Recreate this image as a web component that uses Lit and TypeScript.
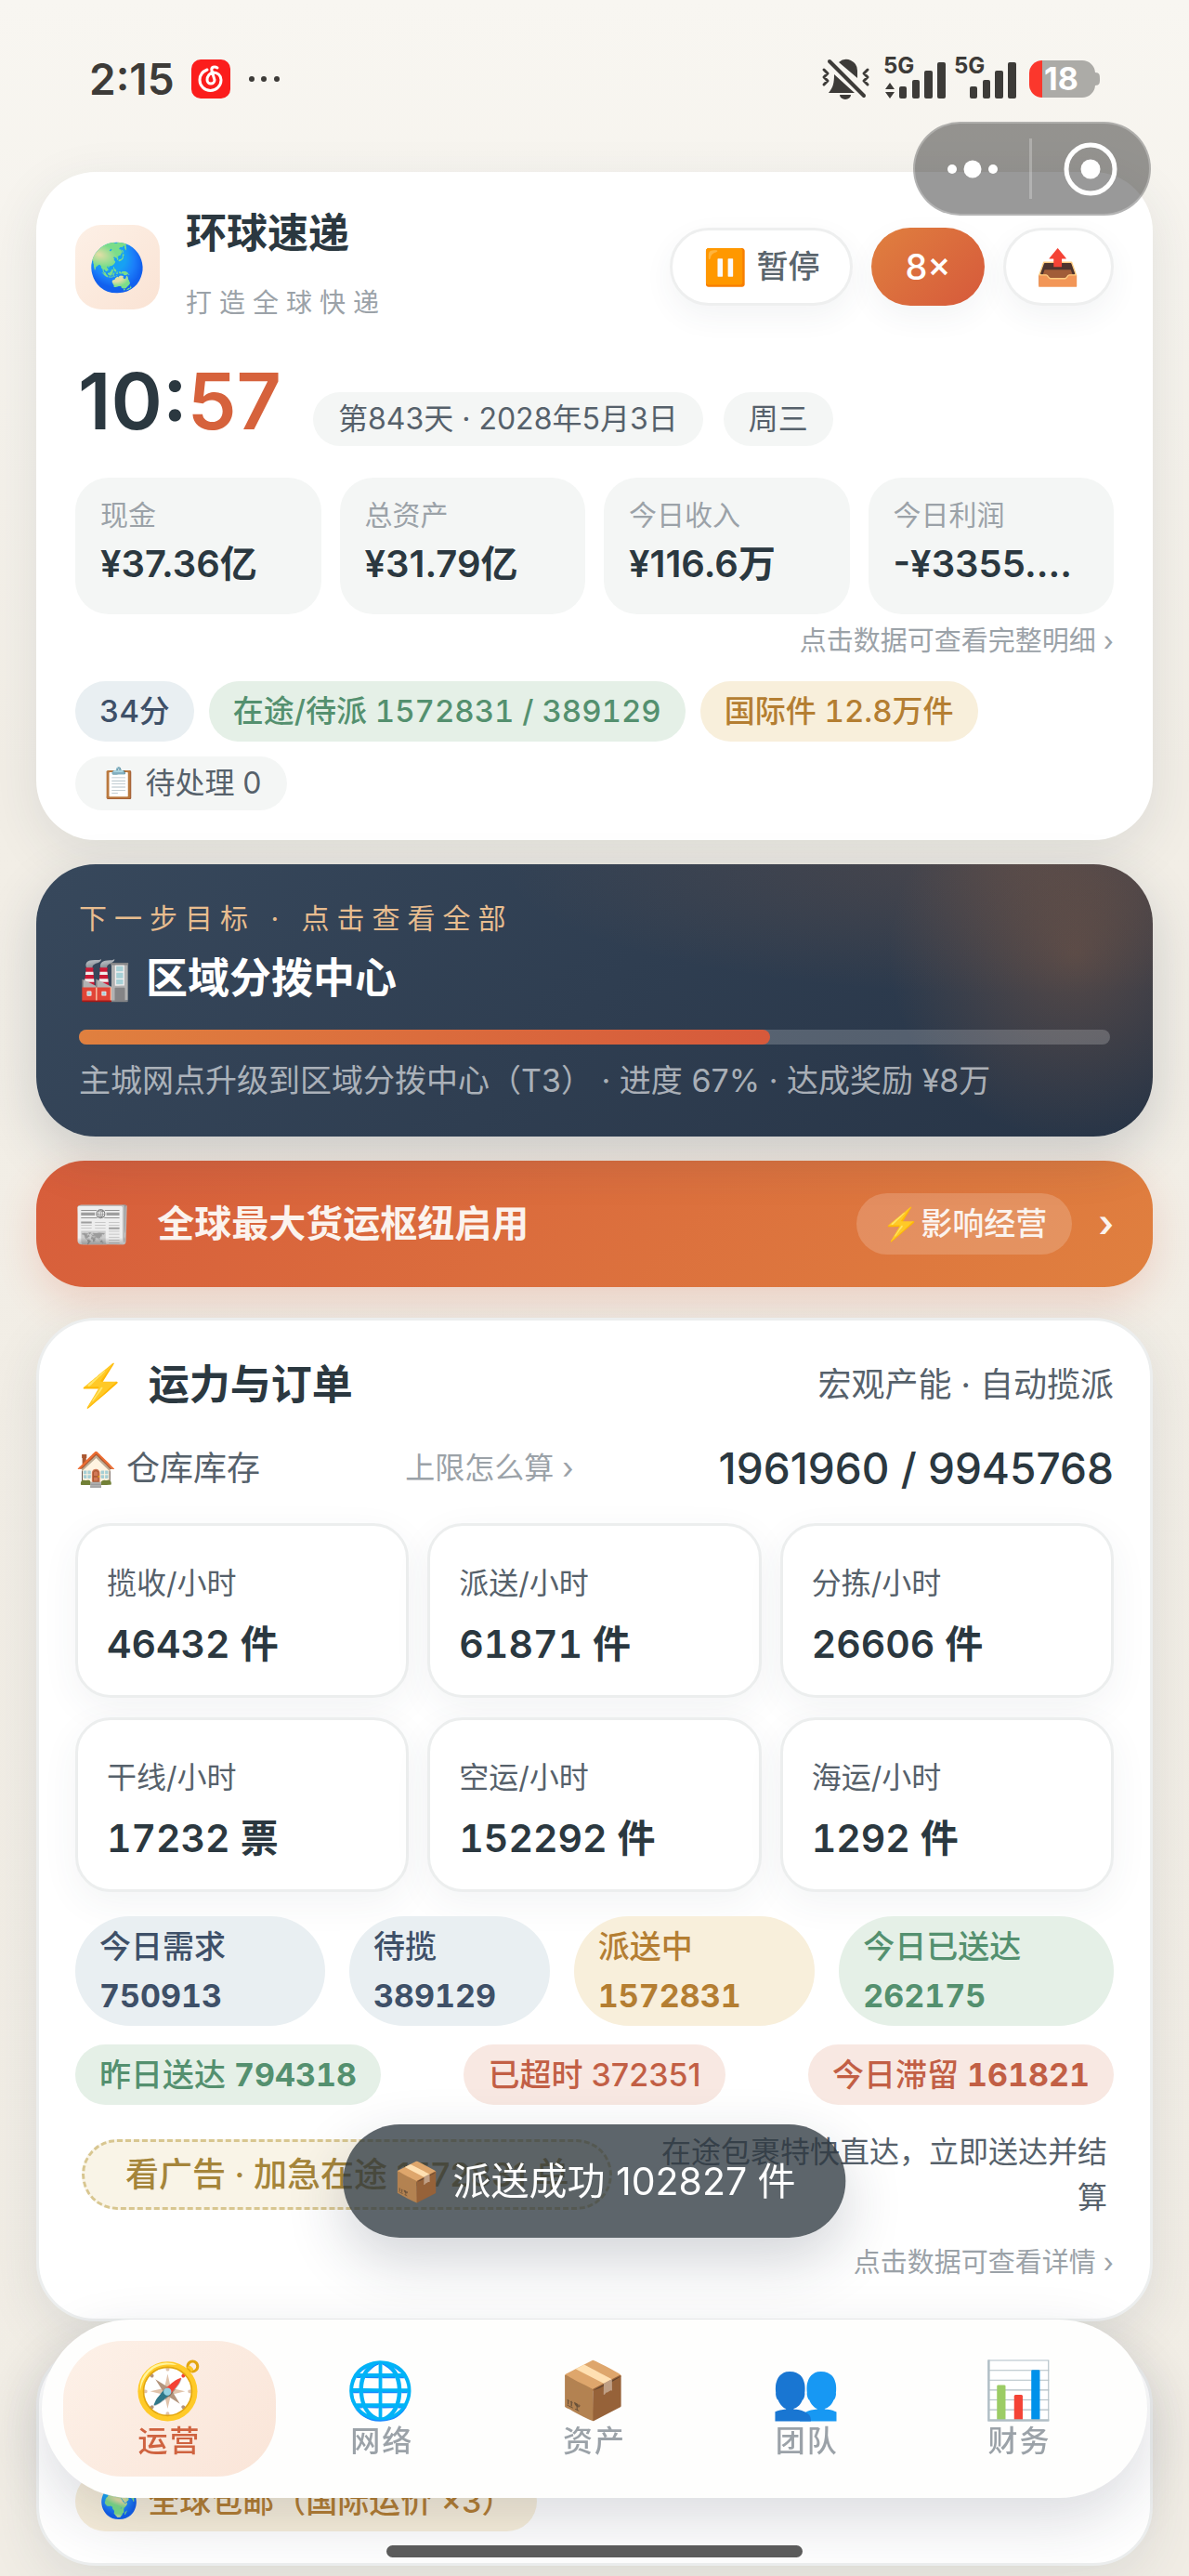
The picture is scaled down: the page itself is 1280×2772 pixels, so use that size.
import { LitElement, css, html, svg } from 'lit';
import { customElement, state } from 'lit/decorators.js';
import { classMap } from 'lit/directives/class-map.js';
import { styleMap } from 'lit/directives/style-map.js';

const STATS = [
    { label: '现金', value: '¥37.36亿' },
    { label: '总资产', value: '¥31.79亿' },
    { label: '今日收入', value: '¥116.6万' },
    { label: '今日利润', value: '-¥3355.…' },
];

const RATES = [
    { label: '揽收/小时', value: '46432 件' },
    { label: '派送/小时', value: '61871 件' },
    { label: '分拣/小时', value: '26606 件' },
    { label: '干线/小时', value: '17232 票' },
    { label: '空运/小时', value: '152292 件' },
    { label: '海运/小时', value: '1292 件' },
];

const FLOW = [
    { label: '今日需求', value: 750913, tone: 'blue' },
    { label: '待揽', value: 389129, tone: 'blue' },
    { label: '派送中', value: 1572831, tone: 'gold' },
    { label: '今日已送达', value: 262175, tone: 'green' },
];

const TABS = [
    { icon: '🧭', label: '运营' },
    { icon: '🌐', label: '网络' },
    { icon: '📦', label: '资产' },
    { icon: '👥', label: '团队' },
    { icon: '📊', label: '财务' },
];

@customElement('app-root')
export class AppRoot extends LitElement {
    @state() tab = 0;

    @state() progress = 67;



    // STYLE

    static styles = css`
        :host{
            display: block;
            min-height: 100vh;
            box-sizing: border-box;
            overflow: hidden;

            font-family: Inter, "Noto Sans CJK SC", "Noto Color Emoji", sans-serif;
            font-size: 32px;
            line-height: 48px;
            color: #2b3840;
            background: linear-gradient(180deg, #f8f6f1 0%, #f2eee6 30%, #f1ede5 100%);
        }

        *{
            box-sizing: border-box;
        }

        button{
            margin: 0;
            padding: 0;
            border: 0;
            background: none;
            font: inherit;
            color: inherit;
            text-align: inherit;
            cursor: pointer;
        }

        a{
            color: inherit;
            text-decoration: none;
        }

        h1, h2, p{
            margin: 0;
        }

        svg{
            display: block;
            flex: none;
        }

        .row{
            display: flex;
            align-items: center;
        }
        .between{
            justify-content: space-between;
        }

        /* status bar */

        .status{
            display: flex;
            align-items: center;
            justify-content: space-between;
            height: 185px;
            padding: 0 96px 16px;
            color: #3d3b38;
        }
        .status .row{
            gap: 18px;
        }
        .status .time{
            font-size: 46px;
            font-weight: 600;
        }
        .status .signals{
            gap: 12px;
        }

        .capsule{
            position: absolute;
            top: 131px;
            right: 41px;

            display: grid;
            grid-template-columns: 123px 3px 1fr;
            align-items: center;
            width: 256px;
            height: 101px;
            border: 2px solid rgb(255 255 255 / 0.25);
            border-radius: 51px;
            background: rgb(0 0 0 / 0.4);
        }
        .capsule button{
            display: grid;
            place-items: center;
        }
        .capsule .line{
            height: 65px;
            background: rgb(255 255 255 / 0.25);
        }

        /* cards */

        main{
            display: flex;
            flex-direction: column;
            gap: 26px;
            padding: 0 39px 15px;
        }

        .card{
            padding: 38px 42px 32px;
            border-radius: 64px;
            background: white;
            box-shadow: 0 16px 56px rgb(44 62 80 / 0.1);
        }
        .card.lined{
            border: 3px solid #eceeee;
            padding: 36px 39px;
        }

        .brand{
            gap: 28px;
        }
        .brand .logo{
            display: grid;
            place-items: center;
            width: 91px;
            height: 91px;
            border-radius: 28px;
            background: linear-gradient(135deg, #fdf0e6, #fae3d4);
            font-size: 50px;
        }
        h1{
            font-size: 44px;
            line-height: 56px;
            font-weight: 700;
        }
        .brand p{
            margin-top: 22px;
            font-size: 28px;
            line-height: 50px;
            letter-spacing: 8px;
            color: #9ba2a8;
        }

        .actions{
            gap: 20px;
        }
        .action{
            display: flex;
            align-items: center;
            gap: 10px;
            height: 84px;
            padding: 0 33px;
            border: 3px solid #eeefef;
            border-radius: 42px;
            background: white;
            box-shadow: 0 12px 32px rgb(44 62 80 / 0.06);
            font-size: 34px;
            font-weight: 500;
            color: #5a656d;
        }
        .action span{
            font-size: 38px;
        }
        .action.speed{
            border-color: transparent;
            background: linear-gradient(135deg, #e0803f, #d6593b) border-box;
            color: white;
        }

        .clock{
            align-items: flex-end;
            gap: 22px;
            margin-top: 33px;
            padding-left: 3px;
        }
        .clock time{
            margin-right: 12px;
            font-size: 84px;
            line-height: 96px;
            font-weight: 600;
        }
        .clock em{
            font-style: normal;
            color: #d6623c;
        }

        .pill{
            padding: 0 27px;
            border-radius: 33px;
            background: #f4f6f5;
            line-height: 58px;
            color: #56616b;
            white-space: nowrap;
        }

        .stats{
            display: grid;
            grid-template-columns: repeat(4, minmax(0, 1fr));
            gap: 20px;
            margin-top: 34px;
        }
        .stat{
            padding: 16px 27px 25px;
            border-radius: 36px;
            background: #f4f6f5;
        }
        .stat span{
            display: block;
            font-size: 30px;
            color: #9ba2a8;
        }
        .stat strong{
            display: block;
            font-size: 40px;
            line-height: 58px;
            font-weight: 600;
            white-space: nowrap;
        }

        .hint{
            display: block;
            font-size: 29px;
            text-align: right;
            color: #9ba2a8;
        }
        .stats + .hint{
            margin-top: 5px;
        }

        .tag{
            padding: 6px 26px;
            border-radius: 60px;
            font-size: 34px;
            line-height: 53px;
            font-weight: 500;
        }
        .tag strong{
            font-weight: 700;
        }
        .tags{
            display: flex;
            flex-wrap: wrap;
            gap: 16px;
            margin-top: 19px;
        }
        .tags .tag{
            font-size: 33px;
        }
        .tags, .tag strong, .rate strong{
            font-variant-numeric: tabular-nums;
        }
        .blue{
            background: #e9eff2;
            color: #3e5068;
        }
        .green{
            background: #e5f0e7;
            color: #54906f;
        }
        .gold{
            background: #f8efdb;
            color: #b47e32;
        }
        .red{
            background: #f8e8e2;
            color: #c25f45;
        }

        /* goal */

        .goal{
            position: relative;
            display: block;
            width: 100%;
            padding: 34px 46px 36px;
            border-radius: 64px;
            background:
                radial-gradient(circle 200px at 93% 33%, rgb(224 128 63 / 0.24), transparent),
                radial-gradient(ellipse 560px 140px at 88% 0, rgb(224 128 63 / 0.16), transparent),
                linear-gradient(135deg, #37485c, #273446);
            box-shadow: 0 20px 56px rgb(44 62 80 / 0.2);
            color: white;
        }
        .goal .eyebrow{
            display: block;
            font-size: 30px;
            letter-spacing: 8px;
            color: #e8bd8f;
        }
        h2{
            display: flex;
            align-items: center;
            gap: 24px;
            font-size: 44px;
            line-height: 66px;
            font-weight: 700;
        }
        .goal h2{
            gap: 16px;
            margin-top: 8px;
            font-size: 45px;
        }
        .bar{
            height: 16px;
            margin-top: 22px;
            border-radius: 8px;
            background: rgb(255 255 255 / 0.2);
        }
        .bar div{
            height: 100%;
            border-radius: 8px;
            background: linear-gradient(90deg, #e0803f, #d6593b);
        }
        .goal p{
            margin-top: 15px;
            font-size: 34px;
            color: rgb(255 255 255 / 0.6);
        }

        /* news */

        .news{
            display: flex;
            align-items: center;
            gap: 28px;
            width: 100%;
            padding: 35px 42px 35px 40px;
            border-radius: 52px;
            background: linear-gradient(135deg, #d75d3b, #e0803f);
            box-shadow: 0 16px 44px rgb(214 89 59 / 0.2);
            font-size: 40px;
            font-weight: 600;
            color: #fbf3ee;
        }
        .news .icon{
            font-size: 50px;
        }
        .news .title{
            flex: 1;
        }
        .news .effect{
            padding: 0 27px;
            border-radius: 33px;
            background: rgb(255 255 255 / 0.18);
            font-size: 34px;
            line-height: 66px;
            font-weight: 500;
        }

        /* capacity */

        .capacity{
            margin-top: 7px;
        }
        .capacity .soft{
            font-size: 36px;
            color: #56616b;
        }
        .stock{
            margin-top: 25px;
        }
        .stock a{
            color: #9ba2a8;
        }
        .stock strong{
            font-size: 46px;
            line-height: 64px;
            font-weight: 500;
        }

        .rates{
            display: grid;
            grid-template-columns: repeat(3, minmax(0, 1fr));
            gap: 21px 20px;
            margin-top: 27px;
        }
        .rate{
            padding: 38px 31px 22px;
            border: 3px solid #eceeee;
            border-radius: 38px;
            background: white;
            box-shadow: 0 12px 40px rgb(44 62 80 / 0.06);
            color: #56616b;
        }
        .rate strong{
            display: block;
            margin-top: 8px;
            font-size: 41px;
            line-height: 66px;
            font-weight: 600;
            color: #2b3840;
        }

        .flow{
            display: flex;
            justify-content: space-between;
            gap: 26px;
            margin-top: 26px;
        }
        .flow + .flow{
            margin-top: 20px;
        }

        .boost{
            display: flex;
            align-items: center;
            gap: 30px;
            margin-top: 26px;
            padding: 0 7px;
        }
        .boost button{
            flex: none;
            height: 76px;
            padding: 0 44px;
            border: 3px dashed #d8c690;
            border-radius: 38px;
            background: #f9f4e7;
            font-size: 36px;
            font-weight: 500;
            color: #a5853a;
        }
        .boost p{
            flex: 1;
            line-height: 49px;
            text-align: right;
            color: #56616b;
        }
        .boost + .hint{
            margin-top: 22px;
        }

        .card.events{
            padding-top: 132px;
            padding-bottom: 34px;
        }
        .events .tag{
            display: inline-flex;
            align-items: center;
            gap: 10px;
            vertical-align: top;
        }

        /* overlays */

        .toast{
            position: fixed;
            left: 50%;
            bottom: 364px;
            transform: translateX(-50%);

            display: flex;
            align-items: center;
            gap: 13px;
            height: 122px;
            padding: 0 54px;
            border-radius: 61px;
            background: rgb(44 54 62 / 0.77);
            box-shadow: 0 24px 64px rgb(30 40 60 / 0.2);
            font-size: 41px;
            color: white;
            white-space: nowrap;
        }

        nav{
            position: fixed;
            left: 45px;
            right: 45px;
            bottom: 84px;

            display: grid;
            grid-template-columns: repeat(5, 1fr);
            padding: 23px;
            border-radius: 96px;
            background: #fefefd;
            box-shadow: 0 24px 64px rgb(30 40 60 / 0.16);
        }
        nav button{
            display: flex;
            flex-direction: column;
            align-items: center;
            height: 146px;
            padding-top: 17px;
            border-radius: 64px;
            letter-spacing: 2px;
            line-height: 42px;
            font-weight: 500;
            color: #9ba2a8;
        }
        nav .icon{
            font-size: 60px;
            line-height: 70px;
        }
        nav button.active{
            background: linear-gradient(135deg, #fdf1e8, #fae5d8);
            color: #cf6340;
        }

        .home{
            position: fixed;
            left: 50%;
            bottom: 20px;
            transform: translateX(-50%);
            width: 448px;
            height: 13px;
            border-radius: 7px;
            background: #5b5b5b;
        }
    `;



    // MARKUP

    renderSignal(x: number, arrows: boolean) {
        return svg`
            <text x="${x}" y="17" font-size="24" font-weight="700">5G</text>
            ${arrows ? svg`<path d="M${x + 2} 34l5-7 5 7zM${x + 2} 37h10l-5 7z" />` : ''}
            <rect x="${x + 17}" y="31" width="8" height="13" rx="2" />
            <rect x="${x + 31}" y="24" width="8" height="20" rx="2" />
            <rect x="${x + 44}" y="14" width="9" height="30" rx="2" />
            <rect x="${x + 58}" y="5" width="9" height="39" rx="2" />
        `;
    }

    renderStatus() {
        return html`
            <header class="status">
                <div class="row">
                    <span class="time">2:15</span>
                    <svg width="42" height="42" viewBox="0 0 42 42">
                        <rect width="42" height="42" rx="10" fill="#fb1d1c" />
                        <path
                            d="M17 11C12 13 9 17 9 22a11.500 11.500 0 0 0 23 0c0-5-4-8-8-8s-7 4-7 8a4 4 0 0 0 8 0l-3-10c-1-4 3-5 6-3"
                            fill="none" stroke="white" stroke-width="3" stroke-linecap="round"
                        />
                    </svg>
                    <svg width="36" height="8" viewBox="0 0 36 8" fill="currentColor">
                        <circle cx="5" cy="4" r="3" />
                        <circle cx="18" cy="4" r="3" />
                        <circle cx="32" cy="4" r="3" />
                    </svg>
                </div>

                <div class="row signals">
                    <svg width="54" height="48" viewBox="0 0 54 48" fill="currentColor">
                        <path d="M19 6a12 12 0 0 1 20 9v8zM14 19l22 20H8c5-6 6-11 6-20zM20 41h12a6 5 0 0 1-12 0z" />
                        <g fill="none" stroke="currentColor" stroke-width="4" stroke-linecap="round" stroke-linejoin="round">
                            <path d="M9 5l37 37" />
                            <path d="M3 14l4 4-4 4 4 4-4 4M50 14l-4 4 4 4-4 4 4 4" stroke-width="3" />
                        </g>
                    </svg>
                    <svg width="146" height="66" viewBox="-1 -10 146 66" fill="currentColor">
                        ${this.renderSignal(0, true)}
                        ${this.renderSignal(76, false)}
                    </svg>
                    <svg width="76" height="40" viewBox="0 0 76 40">
                        <path d="M14 0h43a14 14 0 0 1 14 13c5 0 5 3 5 7s0 7-5 7a14 14 0 0 1-14 13H14z" fill="#acaba7" />
                        <path d="M14 0v40a14 14 0 0 1-14-14V14A14 14 0 0 1 14 0z" fill="#fb372c" />
                        <text x="16" y="32" font-size="34" font-weight="700" fill="white">18</text>
                    </svg>
                </div>
            </header>

            <div class="capsule">
                <button aria-label="更多">
                    <svg width="56" height="20" viewBox="0 0 56 20" fill="white">
                        <circle cx="6" cy="10" r="5" />
                        <circle cx="28" cy="10" r="9.500" />
                        <circle cx="50" cy="10" r="5" />
                    </svg>
                </button>
                <span class="line"></span>
                <button aria-label="关闭">
                    <svg width="58" height="58" viewBox="0 0 58 58" fill="white">
                        <circle cx="29" cy="29" r="26" fill="none" stroke="white" stroke-width="5" />
                        <circle cx="29" cy="29" r="10.500" />
                    </svg>
                </button>
            </div>
        `;
    }

    renderOverview() {
        return html`
            <section class="card">
                <div class="row between">
                    <div class="row brand">
                        <span class="logo">🌏</span>
                        <div>
                            <h1>环球速递</h1>
                            <p>打造全球快递</p>
                        </div>
                    </div>
                    <div class="row actions">
                        <button class="action"><span>⏸️</span>暂停</button>
                        <button class="action speed"><span>8×</span></button>
                        <button class="action" aria-label="导出"><span>📤</span></button>
                    </div>
                </div>

                <div class="row clock">
                    <time>10:<em>57</em></time>
                    <span class="pill">第843天 · 2028年5月3日</span>
                    <span class="pill">周三</span>
                </div>

                <div class="stats">
                    ${STATS.map((stat) => html`
                        <button class="stat">
                            <span>${stat.label}</span>
                            <strong>${stat.value}</strong>
                        </button>
                    `)}
                </div>
                <a class="hint" href="#detail">点击数据可查看完整明细 ›</a>

                <div class="tags">
                    <span class="tag blue">34分</span>
                    <span class="tag green">在途/待派 1572831 / 389129</span>
                    <span class="tag gold">国际件 12.8万件</span>
                    <span class="pill">📋 待处理 0</span>
                </div>
            </section>
        `;
    }

    renderGoal() {
        return html`
            <button class="goal">
                <span class="eyebrow">下一步目标 · 点击查看全部</span>
                <h2><span>🏭</span>区域分拨中心</h2>
                <div class="bar">
                    <div style=${styleMap({ width: `${this.progress}%` })}></div>
                </div>
                <p>主城网点升级到区域分拨中心（T3） · 进度 ${this.progress}% · 达成奖励 ¥8万</p>
            </button>

            <button class="news">
                <span class="icon">📰</span>
                <span class="title">全球最大货运枢纽启用</span>
                <span class="effect">⚡影响经营</span>
                <span>›</span>
            </button>
        `;
    }

    renderCapacity() {
        return html`
            <section class="card lined capacity">
                <div class="row between">
                    <h2><span>⚡</span>运力与订单</h2>
                    <span class="soft">宏观产能 · 自动揽派</span>
                </div>

                <div class="row between stock">
                    <span class="soft">🏠 仓库库存</span>
                    <a href="#limit">上限怎么算 ›</a>
                    <strong>1961960 / 9945768</strong>
                </div>

                <div class="rates">
                    ${RATES.map((rate) => html`
                        <div class="rate">
                            ${rate.label}
                            <strong>${rate.value}</strong>
                        </div>
                    `)}
                </div>

                <div class="flow">
                    ${FLOW.map((item) => html`
                        <span class="tag ${item.tone}">${item.label} <strong>${item.value}</strong></span>
                    `)}
                </div>
                <div class="flow">
                    <span class="tag green">昨日送达 <strong>794318</strong></span>
                    <span class="tag red">已超时 372351</span>
                    <span class="tag red">今日滞留 <strong>161821</strong></span>
                </div>

                <div class="boost">
                    <button>看广告 · 加急在途 1572831 单</button>
                    <p>在途包裹特快直达，立即送达并结算</p>
                </div>
                <a class="hint" href="#orders">点击数据可查看详情 ›</a>
            </section>

            <section class="card lined events">
                <span class="tag gold"><span>🌍</span>全球包邮（国际运价 ×3）</span>
            </section>
        `;
    }

    render() {
        return html`
            ${this.renderStatus()}

            <main>
                ${this.renderOverview()}
                ${this.renderGoal()}
                ${this.renderCapacity()}
            </main>

            <nav>
                ${TABS.map((tab, index) => html`
                    <button class=${classMap({ active: index === this.tab })} @click=${() => { this.tab = index; }}>
                        <span class="icon">${tab.icon}</span>
                        ${tab.label}
                    </button>
                `)}
            </nav>

            <div class="toast" role="status"><span>📦</span>派送成功 102827 件</div>
            <div class="home"></div>
        `;
    }
}
